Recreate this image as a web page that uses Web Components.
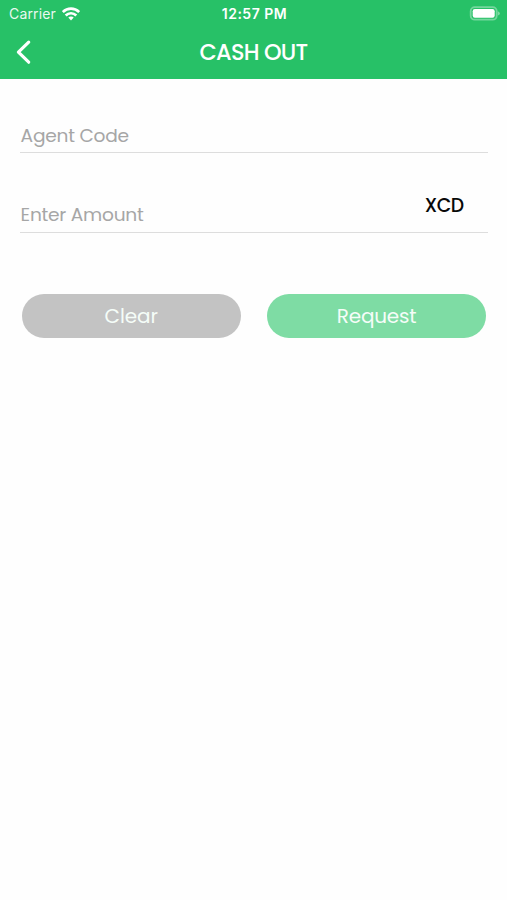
<!DOCTYPE html>
<html lang="en"><head><meta charset="utf-8"><title>Cash Out</title>
<style>html,body{margin:0;height:100%;background:#fefefe;font-family:Poppins,Inter,sans-serif}</style></head>
<body>
<cash-screen></cash-screen>
<script>
const define=(name,html)=>customElements.define(name,class extends HTMLElement{
  constructor(){super();this.attachShadow({mode:'open'}).innerHTML=html;}
});
define('status-bar',`<style>
:host{display:grid;grid-template-columns:1fr auto 1fr;align-items:center;height:27px;box-sizing:border-box;padding:0 7px 0 9px;color:#fff;font:14px Inter,sans-serif}
.left{display:flex;align-items:center;gap:6px}.carrier{letter-spacing:.15px;opacity:.9}
.time{font-weight:600;font-size:14px;letter-spacing:.5px}
.battery{justify-self:end}svg{display:block}
</style>
<div class="left"><span class="carrier">Carrier</span>
<svg width="18" height="14" viewBox="0 0 18 14" fill="none" stroke="#fff" stroke-width="2.7"><path d="M.8 5.1C5.4.5 12.6.5 17.2 5.1"/><path d="M3.7 8.5C6.7 5.5 11.3 5.5 14.3 8.5"/><path d="M9 9.4c-1.1 0-2 .4-2.7 1.1L9 13.4l2.7-2.9C11 9.8 10.1 9.4 9 9.4Z" fill="#fff" stroke="none"/></svg></div>
<span class="time">12:57 PM</span>
<svg class="battery" width="31" height="15" viewBox="0 0 31 15"><rect x="1.7" y="1.1" width="26" height="12.6" rx="4" fill="none" stroke="#fff" stroke-opacity=".36" stroke-width="1.8"/><rect x="3.7" y="3" width="22" height="8.8" rx="2.2" fill="#fff"/><path d="M28.9 5.2q2 .7 2 2.2t-2 2.2z" fill="#fff" opacity=".4"/></svg>`);
define('nav-bar',`<style>
:host{display:grid;grid-template-columns:48px 1fr 48px;align-items:center;height:52px;color:#fff}
svg{display:block;margin-left:14px}h1{margin:0;padding-bottom:3px;text-align:center;font-size:22.4px;line-height:26px;font-weight:500;letter-spacing:-.7px}
</style><svg width="20" height="28" viewBox="0 0 20 28" fill="none" stroke="#fff" stroke-width="3.2" stroke-linecap="round" stroke-linejoin="round"><path d="M14.7 3.2 4.4 13.2 14.7 23.2"/></svg><h1><slot></slot></h1>`);
define('form-field',`<style>
:host{display:flex;justify-content:space-between;align-items:flex-end;height:var(--height,47px);box-sizing:border-box;border-bottom:1px solid #ddd;color:#a6a6a6;font-size:18.6px;line-height:24px}
.label{padding:0 0 var(--label-gap,4px) .6px;letter-spacing:-.24px}
::slotted([slot=unit]){color:#080808;font-weight:500;font-size:18.8px;letter-spacing:-.5px;padding:0 24px 14px 0}
</style><span class="label"><slot></slot></span><slot name="unit"></slot>`);
define('pill-button',`<style>
:host{display:block;min-width:0}button{display:block;width:100%;height:44px;padding:1px 0 0;border:0;border-radius:22px;background:var(--fill);color:#f5fdf8;font:400 20px/43px Poppins,Inter,sans-serif;letter-spacing:var(--tracking,0)}
</style><button type="button"><slot></slot></button>`);
define('cash-screen',`<style>
:host{display:block;min-height:100%}header{background:#27c167;height:79px}
main{padding:27px 19.5px 0 20px}.amount{--height:80px;--label-gap:5px}
.actions{display:grid;grid-template-columns:1fr 1fr;gap:26px;padding:60.6px 1.3px 0 1.6px}
</style><header><status-bar></status-bar><nav-bar>CASH OUT</nav-bar></header>
<main><form-field>Agent Code</form-field><form-field class="amount">Enter Amount<span slot="unit">XCD</span></form-field>
<div class="actions"><pill-button style="--fill:#c3c3c3;--tracking:-.1px">Clear</pill-button><pill-button style="--fill:#7edca4;--tracking:-.2px">Request</pill-button></div></main>`);
</script></body></html>
